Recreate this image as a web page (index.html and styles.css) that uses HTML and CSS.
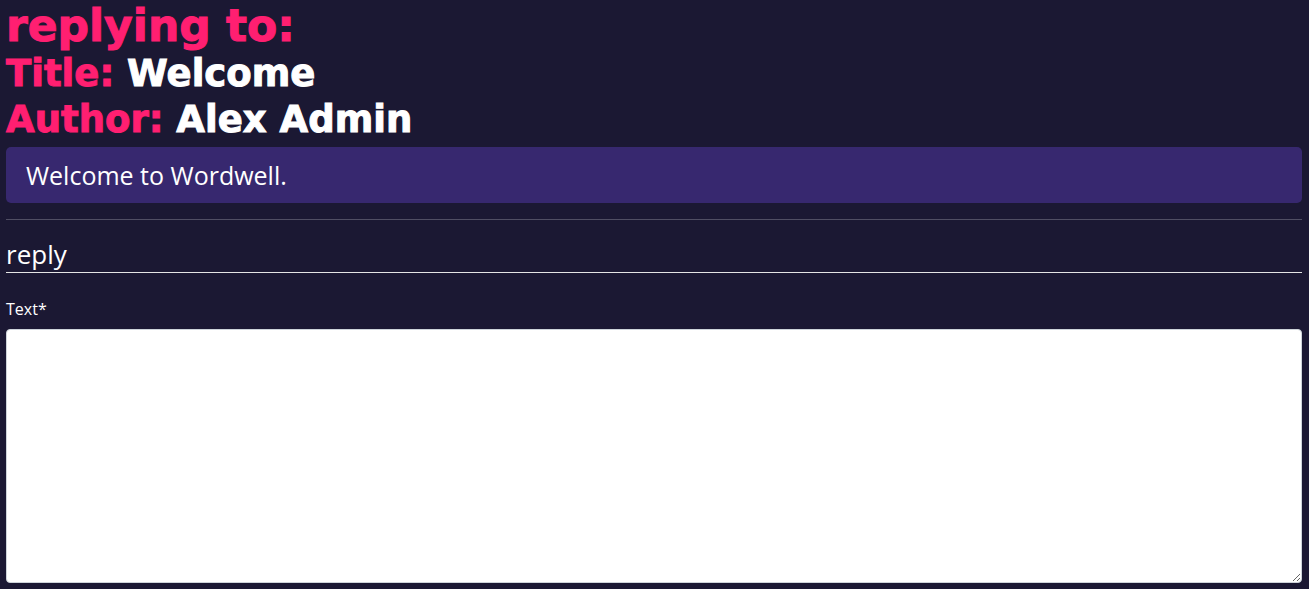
FILE: index.html
```html
<!DOCTYPE html>
<html lang="en">
<head>
<meta charset="utf-8">
<meta name="viewport" content="width=device-width, initial-scale=1">
<title>Reply</title>
<link rel="stylesheet" href="styles.css">
</head>
<body>
<main class="page">
  <header class="post-head">
    <h1 class="heading heading-main">replying to:</h1>
    <h2 class="heading heading-sub">Title: <span class="value">Welcome</span></h2>
    <h2 class="heading heading-sub">Author: <span class="value">Alex Admin</span></h2>
  </header>
  <div class="post-body">Welcome to Wordwell.</div>
  <hr class="divider">
  <form class="reply-form">
    <fieldset class="group">
      <legend class="legend">reply</legend>
      <label class="label" for="text">Text*</label>
      <textarea class="textarea" id="text" name="text" rows="10" required></textarea>
    </fieldset>
  </form>
</main>
</body>
</html>
```
FILE: styles.css
```css
* { box-sizing: border-box; }
body {
  margin: 0;
  background: #1b1833;
  color: #fff;
  font-family: "Open Sans", "Noto Sans", sans-serif;
  font-size: 16px;
  font-weight: 500;
  line-height: 24px;
}
.page { padding: 0 7px 6px 6px; }
.heading {
  margin: 0;
  color: #ff1f71;
  font-family: "DejaVu Sans", sans-serif;
  font-weight: 700;
  -webkit-text-stroke: 1px currentColor;
}
.heading-main { font-size: 44px; line-height: 52px; margin-bottom: 2px; }
.heading-sub { font-size: 37px; line-height: 40px; margin-bottom: 6px; }
.value { color: #fff; }
.post-body {
  margin-top: 7px;
  padding: 8px 20px;
  border-radius: 5px;
  background: #37286f;
  font-size: 25px;
  line-height: 40px;
}
.divider {
  margin: 16px 0;
  border: 0;
  border-top: 1px solid #504e63;
}
.group { margin: 0; padding: 0; border: 0; min-width: 0; }
.legend {
  display: block;
  width: 100%;
  margin-bottom: 24px;
  padding: 0;
  border-bottom: 1px solid #e5e5e5;
  font-size: 26px;
  line-height: 36px;
}
.label { display: block; margin-bottom: 8px; }
.textarea {
  display: block;
  width: 100%;
  height: 254px;
  padding: 6px 12px;
  border: 1px solid #ced4da;
  border-radius: 4px;
  background: #fff;
  color: #212529;
  font: inherit;
  resize: vertical;
}
```
